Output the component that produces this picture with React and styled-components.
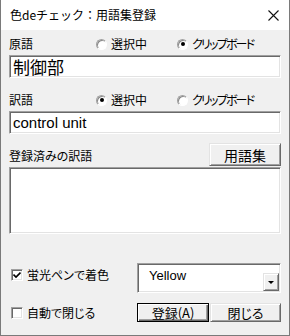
import React from 'react';
import styled, { createGlobalStyle } from 'styled-components';

const GlobalStyle = createGlobalStyle`
	html, body {
		margin: 0;
		padding: 0;
		background: #ffffff;
	}
	body {
		font-family: 'Noto Sans CJK JP', 'Liberation Sans', sans-serif;
		font-feature-settings: 'palt';
		color: #000000;
	}
`;

const Window = styled.div`
	width: 290px;
	height: 336px;
	box-sizing: border-box;
	border: 1px solid #7a7a7a;
	border-top: none;
	display: flex;
	flex-direction: column;
	background: #f0f0f0;
`;

const TitleBar = styled.div`
	height: 30px;
	flex-shrink: 0;
	background: #ffffff;
	display: flex;
	align-items: center;
	justify-content: space-between;
	padding: 0 10px 0 9px;
	font-size: 12px;
	line-height: 14px;
	font-feature-settings: normal;
`;

const CloseIcon = () => (
	<svg width='11' height='11' viewBox='0 0 11 11'>
		<path d='M0.5 0.5 L10.5 10.5 M10.5 0.5 L0.5 10.5' stroke='#111' strokeWidth='1.1' fill='none' />
	</svg>
);

const Client = styled.div`
	flex: 1;
	padding: 6px 8px 0 8px;
	display: flex;
	flex-direction: column;
	font-size: 12px;
	line-height: 14px;
`;

const OptionRow = styled.div`
	display: grid;
	grid-template-columns: 87px 81px auto;
	align-items: center;
	height: 16px;
	margin-top: ${(p) => p.$top || 0}px;
`;

const Label = styled.span`
	white-space: nowrap;
	padding-bottom: ${(p) => p.$pb || 0}px;
`;

const RadioWrap = styled.span`
	display: flex;
	align-items: center;
	gap: 4px;
`;

const RadioText = styled.span`
	white-space: nowrap;
	letter-spacing: ${(p) => (p.$narrow ? '-1.8px' : '0')};
`;

const RadioCircle = styled.span`
	width: 11px;
	height: 11px;
	box-sizing: border-box;
	border-radius: 50%;
	border: 1px solid;
	border-color: #a0a0a0 #ffffff #ffffff #a0a0a0;
	box-shadow: inset 1px 1px 0 #8a8a8a;
	background: #ffffff;
	display: flex;
	align-items: center;
	justify-content: center;
	&::after {
		content: '';
		width: 4px;
		height: 4px;
		border-radius: 50%;
		background: ${(p) => (p.$checked ? '#000' : 'transparent')};
	}
`;

const Radio = ({ checked, narrow, children }) => (
	<RadioWrap>
		<RadioCircle $checked={checked} />
		<RadioText $narrow={narrow}>{children}</RadioText>
	</RadioWrap>
);

const Sunken = styled.div`
	box-sizing: border-box;
	background: #ffffff;
	border: 1px solid;
	border-color: #a0a0a0 #ffffff #ffffff #a0a0a0;
	box-shadow: inset 1px 1px 0 #696969, inset -1px -1px 0 #e3e3e3;
`;

const TextField = styled(Sunken)`
	height: 23px;
	margin-top: 3px;
	padding: 0 0 0 3px;
	display: flex;
	align-items: center;
	font-size: ${(p) => p.$size || 16}px;
	font-family: ${(p) => (p.$latin ? "'Liberation Sans', sans-serif" : "'Noto Sans CJK JP', sans-serif")};
	white-space: nowrap;
`;

const ListBox = styled(Sunken)`
	height: 67px;
	margin-top: 1px;
`;

const HeaderRow = styled.div`
	display: flex;
	justify-content: space-between;
	align-items: flex-end;
	margin-top: 9px;
`;

const Button = styled.button`
	box-sizing: border-box;
	width: ${(p) => p.$w}px;
	height: ${(p) => p.$h}px;
	padding: 0;
	font-family: 'Noto Sans CJK JP', 'Liberation Sans', sans-serif;
	font-feature-settings: 'palt';
	font-size: ${(p) => p.$fs || 13}px;
	line-height: 14px;
	color: #000;
	background: #f0f0f0;
	border: 1px solid;
	border-color: ${(p) => (p.$default ? '#000 #000 #000 #000' : '#e3e3e3 #696969 #696969 #e3e3e3')};
	box-shadow: ${(p) =>
		p.$default
			? 'inset 1px 1px 0 #ffffff, inset -1px -1px 0 #696969, inset -2px -2px 0 #a0a0a0'
			: 'inset 1px 1px 0 #ffffff, inset -1px -1px 0 #a0a0a0'};
`;

const Bottom = styled.div`
	display: flex;
	flex-direction: column;
	margin-top: 29px;
`;

const BottomRow = styled.div`
	display: flex;
	align-items: ${(p) => p.$align || 'center'};
	margin-top: ${(p) => p.$top || 0}px;
`;

const CheckLabel = styled.label`
	flex: 1;
	display: flex;
	align-items: center;
	gap: 4px;
	padding-left: 2px;
	margin-top: ${(p) => p.$top || 0}px;
	white-space: nowrap;
`;

const CheckBox = styled(Sunken)`
	width: 12px;
	height: 12px;
	display: flex;
	align-items: center;
	justify-content: center;
`;

const CheckMark = () => (
	<svg width='8' height='8' viewBox='0 0 8 8'>
		<path d='M0.5 3.5 L3 6 L7.5 1.5' stroke='#000' strokeWidth='1.6' fill='none' />
	</svg>
);

const Combo = styled(Sunken)`
	width: 144px;
	height: 30px;
	display: flex;
	justify-content: space-between;
	padding: 1px 1px 1px 11px;
`;

const ComboText = styled.span`
	font-family: 'Liberation Sans', sans-serif;
	font-size: 13px;
	line-height: 15px;
	margin-top: 3px;
`;

const DropButton = styled.span`
	align-self: flex-end;
	width: 16px;
	height: 18px;
	box-sizing: border-box;
	background: #f0f0f0;
	border: 1px solid;
	border-color: #e3e3e3 #696969 #696969 #e3e3e3;
	box-shadow: inset 1px 1px 0 #ffffff, inset -1px -1px 0 #a0a0a0;
	display: flex;
	align-items: center;
	justify-content: center;
	&::after {
		content: '';
		border-left: 3px solid transparent;
		border-right: 3px solid transparent;
		border-top: 3px solid #000;
		margin-top: 1px;
	}
`;

const ButtonPair = styled.div`
	display: flex;
	gap: 1px;
`;

export default function App() {
	return (
		<>
			<GlobalStyle />
			<Window>
				<TitleBar>
					<span>色deチェック：用語集登録</span>
					<CloseIcon />
				</TitleBar>
				<Client>
					<OptionRow>
						<Label>原語</Label>
						<Radio>選択中</Radio>
						<Radio checked narrow>クリップボード</Radio>
					</OptionRow>
					<TextField $size={17}>制御部</TextField>

					<OptionRow $top={14}>
						<Label>訳語</Label>
						<Radio checked>選択中</Radio>
						<Radio narrow>クリップボード</Radio>
					</OptionRow>
					<TextField $latin $size={15}>control unit</TextField>

					<HeaderRow>
						<Label $pb={3}>登録済みの訳語</Label>
						<Button $w={72} $h={23} $fs={14}>用語集</Button>
					</HeaderRow>
					<ListBox />

					<Bottom>
						<BottomRow $align='flex-start'>
							<CheckLabel $top={5}>
								<CheckBox>
									<CheckMark />
								</CheckBox>
								<span>蛍光ペンで着色</span>
							</CheckLabel>
							<Combo>
								<ComboText>Yellow</ComboText>
								<DropButton />
							</Combo>
						</BottomRow>
						<BottomRow $top={10}>
							<CheckLabel>
								<CheckBox />
								<span>自動で閉じる</span>
							</CheckLabel>
							<ButtonPair>
								<Button $w={72} $h={19} $default>登録(A)</Button>
								<Button $w={71} $h={19}>閉じる</Button>
							</ButtonPair>
						</BottomRow>
					</Bottom>
				</Client>
			</Window>
		</>
	);
}
